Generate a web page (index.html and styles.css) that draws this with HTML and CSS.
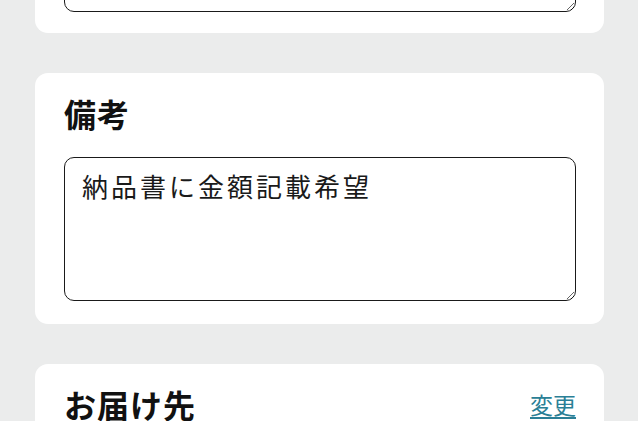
FILE: index.html
```html
<!DOCTYPE html>
<html lang="ja">
<head>
<meta charset="utf-8">
<link rel="stylesheet" href="styles.css">
</head>
<body>
<main class="page">
  <section class="card card-top">
    <textarea class="field field-top" aria-label="入力"></textarea>
  </section>
  <section class="card">
    <h2 class="card-title">備考</h2>
    <textarea class="field field-note">納品書に金額記載希望</textarea>
  </section>
  <section class="card">
    <div class="card-head">
      <h2 class="card-title">お届け先</h2>
      <a class="change-link" href="#">変更</a>
    </div>
  </section>
</main>
</body>
</html>
```
FILE: styles.css
```css
html, body {
  margin: 0;
  padding: 0;
  background: #ebecec;
  overflow: hidden;
}
body {
  font-family: "Noto Sans CJK JP", "Noto Sans", sans-serif;
  color: #111;
}
.page {
  display: flex;
  flex-direction: column;
  gap: 40px;
  padding: 0 34px 0 35px;
  margin-top: -91px;
}
.card {
  background: #fff;
  border-radius: 13px;
  padding: 19px 28px 23px 29px;
}
.card-top {
  padding-bottom: 21px;
}
.card-title {
  margin: 0;
  font-size: 32px;
  line-height: 42px;
  font-weight: 700;
  letter-spacing: 1px;
}
.field {
  display: block;
  box-sizing: border-box;
  width: 100%;
  border: 1.6px solid #1a1a1a;
  border-radius: 10px;
  font-family: "Noto Sans CJK JP", "Noto Sans", sans-serif;
  font-size: 26px;
  line-height: 36px;
  letter-spacing: 3px;
  color: #1a1a1a;
  padding: 10px 17px;
  background: #fff;
  outline: none;
}
.field-top {
  height: 84px;
}
.field-note {
  margin-top: 23px;
  height: 144px;
}
.card-head {
  display: flex;
  justify-content: space-between;
  align-items: center;
}
.change-link {
  font-size: 23px;
  color: #2b7f96;
  text-decoration: underline;
  text-underline-offset: 3px;
}
```
